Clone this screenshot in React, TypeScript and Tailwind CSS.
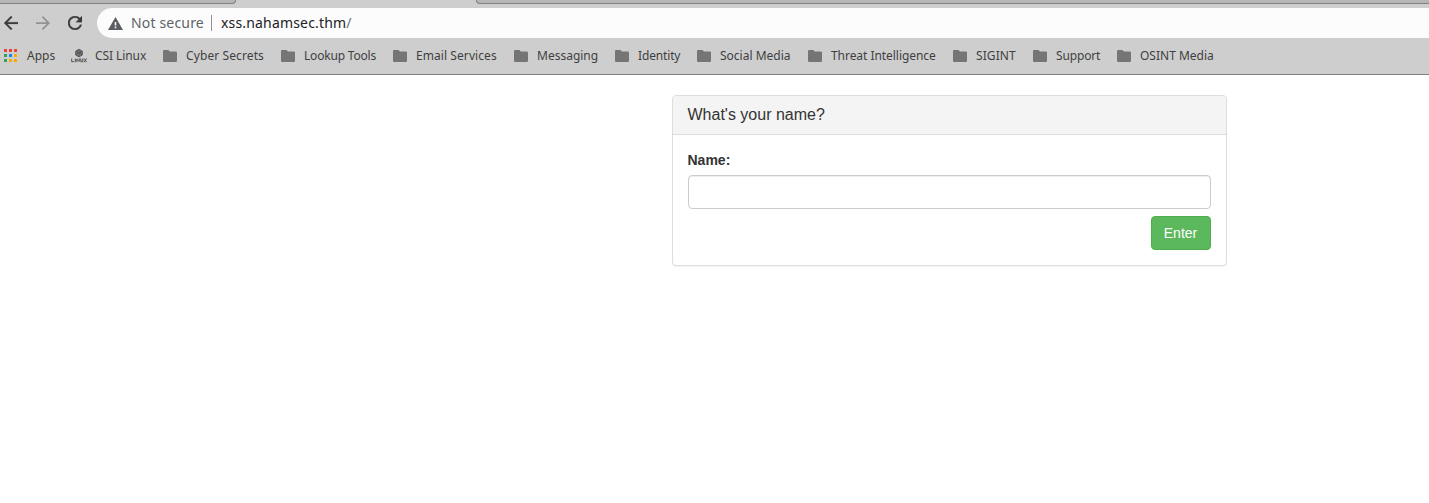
import React from "react";

const folders: { label: string; width: string; tracking: string }[] = [
  { label: "Cyber Secrets", width: "w-[118px]", tracking: "tracking-[0.1px]" },
  { label: "Lookup Tools", width: "w-[112px]", tracking: "tracking-[-0.19px]" },
  { label: "Email Services", width: "w-[121px]", tracking: "tracking-[0.07px]" },
  { label: "Messaging", width: "w-[101px]", tracking: "tracking-normal" },
  { label: "Identity", width: "w-[82px]", tracking: "tracking-[-0.15px]" },
  { label: "Social Media", width: "w-[111px]", tracking: "tracking-normal" },
  { label: "Threat Intelligence", width: "w-[145px]", tracking: "tracking-[-0.05px]" },
  { label: "SIGINT", width: "w-[80px]", tracking: "tracking-[0.1px]" },
  { label: "Support", width: "w-[84px]", tracking: "tracking-[-0.15px]" },
  { label: "OSINT Media", width: "w-[110px]", tracking: "tracking-normal" },
];

const appDots = [
  "#ea4335", "#ea4335", "#ea4335",
  "#34a05a", "#1a84f0", "#f9ab00",
  "#34a05a", "#f9ab00", "#f9ab00",
];

function TabStrip() {
  return (
    <div className="flex h-1 bg-[#cecece]">
      <div className="h-1 w-[236px] rounded-br-[5px] border-r border-b border-[#808080] bg-[#b6b6b6]" />
      <div className="w-[240px]" />
      <div className="h-1 flex-1 rounded-bl-[5px] border-b border-l border-[#808080] bg-[#b6b6b6]" />
    </div>
  );
}

function Toolbar() {
  return (
    <div className="flex h-[34px] items-start pt-1 pl-1">
      <svg className="mt-2 size-[14px] shrink-0" viewBox="4 4 16 16" fill="#3b3b3b">
        <path d="M20 11H7.83l5.59-5.59L12 4l-8 8 8 8 1.41-1.41L7.83 13H20v-2z" stroke="#3b3b3b" strokeWidth=".3" />
      </svg>
      <svg className="mt-2 ml-[18px] size-[14px] shrink-0" viewBox="4 4 16 16" fill="#929292">
        <path d="M12 4l-1.41 1.41L16.17 11H4v2h12.17l-5.58 5.59L12 20l8-8z" />
      </svg>
      <svg className="mt-2 ml-[18px] size-[14px] shrink-0" viewBox="4 4 16 16" fill="#3b3b3b">
        <path d="M17.65 6.35C16.2 4.9 14.21 4 12 4c-4.42 0-7.99 3.58-7.99 8s3.57 8 7.99 8c3.73 0 6.84-2.55 7.73-6h-2.08c-.82 2.33-3.04 4-5.65 4-3.31 0-6-2.69-6-6s2.69-6 6-6c1.66 0 3.14.69 4.22 1.78L13 11h7V4l-2.35 2.35z" stroke="#3b3b3b" strokeWidth=".3" />
      </svg>
      <div className="ml-[15px] flex h-[30px] flex-1 items-center rounded-l-full bg-[#fcfcfc] pl-[11px] text-[14px] leading-[30px]">
        <svg className="h-[13px] w-[15px] shrink-0" viewBox="0 0 15 13">
          <path d="M7.5 0L15 13H0z" fill="#5a5d61" />
          <path d="M6.7 5h1.6v3.4H6.7zM6.7 9.6h1.6v1.6H6.7z" fill="#fcfcfc" />
        </svg>
        <span className="ml-2 w-[80px] shrink-0 tracking-[0.17px] whitespace-nowrap text-[#5f6368]">Not secure</span>
        <span className="h-4 w-px bg-[#8e9093]" />
        <span className="ml-[9px] tracking-[0.17px] whitespace-nowrap text-[#202124]">
          xss.nahamsec.thm<span className="text-[#6b6e73]">/</span>
        </span>
      </div>
    </div>
  );
}

function LinuxIcon() {
  return (
    <svg className="h-4 w-4 shrink-0" viewBox="0 0 16 16" fill="none" stroke="#505050">
      <path d="M8 1.3l3.3 1.9v3.8L8 8.9 4.700 7v-3.8z" fill="#777" strokeWidth=".9" />
      <path d="M4.700 3.200L8 5.100l3.300-1.900M8 5v4M6.200 2.200l3.600 2M5 6.300l3-1.700 3 1.700" strokeWidth=".7" />
      <path d="M.7 10.500v3.200h2.400M4.300 10.500v3.700M5.900 14.100v-3.200l2.300 2.600v-3.100M9.800 10.500v3.200h2v-3.200M13.200 10.500l2.300 3.700M15.500 10.500l-2.300 3.700" strokeWidth="1" />
    </svg>
  );
}

function BookmarksBar() {
  return (
    <div className="flex h-[37px] items-start overflow-hidden border-b border-[#808080] pl-1 text-[12px] leading-4 whitespace-nowrap text-[#3f3f3f]">
      <div className="flex w-[67px] shrink-0 pt-[10px]">
        <div className="mt-[1px] grid h-[13px] w-[13px] grid-cols-3 gap-[2px]">
          {appDots.map((color, i) => (
            <span key={i} className="size-[3px]" style={{ backgroundColor: color }} />
          ))}
        </div>
        <span className="ml-[10px]">Apps</span>
      </div>
      <div className="flex w-[92px] shrink-0 pt-[10px]">
        <LinuxIcon />
        <span className="ml-2 tracking-[-0.08px]">CSI Linux</span>
      </div>
      {folders.map(({ label, width, tracking }) => (
        <div key={label} className={`flex shrink-0 pt-[10px] ${width}`}>
          <svg className="mt-[2px] h-3 w-[14px] shrink-0" viewBox="0 0 14 12">
            <path d="M1.3 0h4.1l1.5 1.5h5.8A1.3 1.3 0 0 1 14 2.8v7.9a1.3 1.3 0 0 1-1.3 1.3H1.3A1.3 1.3 0 0 1 0 10.7V1.3A1.3 1.3 0 0 1 1.3 0z" fill="#757575" />
          </svg>
          <span className={`ml-[9px] ${tracking}`}>{label}</span>
        </div>
      ))}
    </div>
  );
}

function NamePanel() {
  return (
    <section className="ml-[671.5px] h-[171px] w-[555px] rounded-[4px] border border-[#ddd] bg-white shadow-[0_1px_1px_rgba(0,0,0,0.05)]">
      <h3 className="h-[39px] rounded-t-[3px] border-b border-[#ddd] bg-[#f4f4f4] pt-[10px] pl-[15px] text-[16px] leading-[17.6px] text-[#333]">
        What's your name?
      </h3>
      <form className="px-[15px] pt-[15px]" onSubmit={(e) => e.preventDefault()}>
        <label htmlFor="name" className="mb-[5px] block text-[14px] leading-5 font-bold text-[#333]">
          Name:
        </label>
        <input
          id="name"
          type="text"
          className="block h-[34px] w-full rounded-[4px] border border-[#ccc] bg-white px-3 text-[14px] shadow-[inset_0_1px_1px_rgba(0,0,0,0.075)] outline-none"
        />
        <div className="mt-[7px] flex justify-end">
          <button className="h-[34px] w-[60px] rounded-[4px] border border-[#4cae4c] bg-[#5cb85c] text-[14px] leading-5 text-white">
            Enter
          </button>
        </div>
      </form>
    </section>
  );
}

export default function App() {
  return (
    <div className="h-[503px] w-[1429px] overflow-hidden bg-white">
      <header className="h-[75px] bg-[#cecece] font-['Noto_Sans',sans-serif]">
        <TabStrip />
        <Toolbar />
        <BookmarksBar />
      </header>
      <main className="pt-5 font-['Liberation_Sans',Arial,sans-serif]">
        <NamePanel />
      </main>
    </div>
  );
}
